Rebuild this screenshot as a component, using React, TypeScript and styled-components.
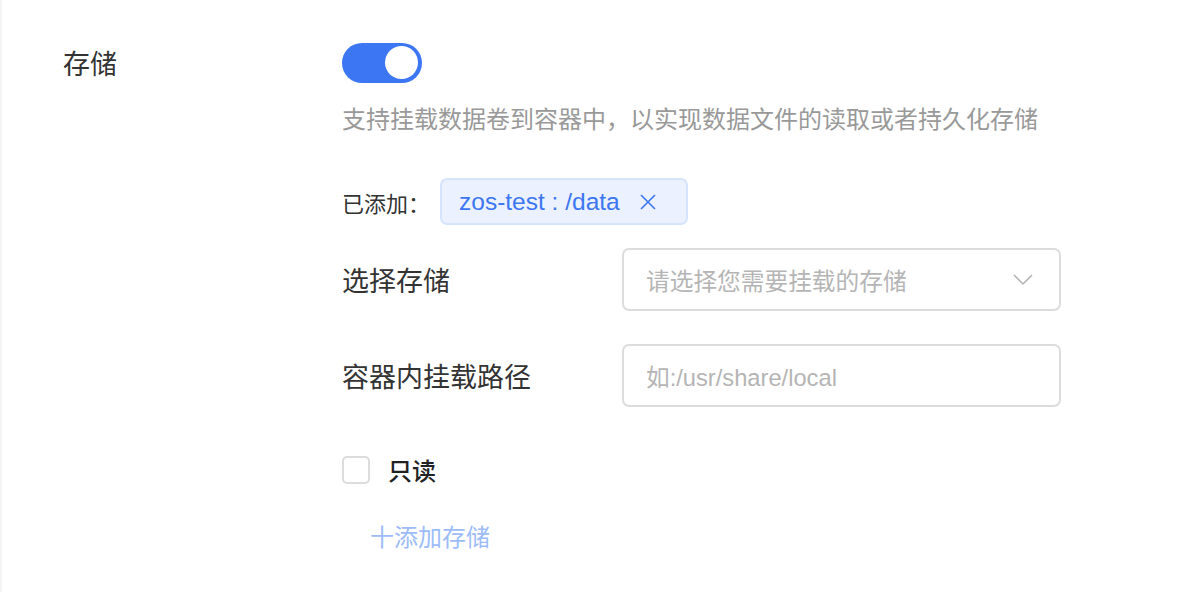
import React from "react";
import styled, { createGlobalStyle } from "styled-components";

const Global = createGlobalStyle`
  html, body { margin: 0; padding: 0; background: #fff; }
  body { font-family: "Noto Sans CJK SC", "Noto Sans", sans-serif; }
  * { box-sizing: border-box; }
`;

const Page = styled.div`
  width: 1194px;
  height: 592px;
  border-left: 2px solid #f4f4f4;
  background: #fff;
  display: flex;
  padding-top: 43px;
`;

const LabelCol = styled.div`
  width: 340px;
  padding-left: 61px;
  font-size: 27px;
  color: #333;
  line-height: 40px;
`;

const Content = styled.div`
  display: flex;
  flex-direction: column;
  align-items: flex-start;
`;

const Switch = styled.div`
  width: 80px;
  height: 40px;
  border-radius: 20px;
  background: #3d76f2;
  position: relative;
  &::after {
    content: "";
    position: absolute;
    right: 4px;
    top: 3px;
    width: 33px;
    height: 33px;
    border-radius: 50%;
    background: #fff;
  }
`;

const Desc = styled.div`
  margin-top: 19px;
  font-size: 24px;
  line-height: 32px;
  color: #999;
`;

const AddedRow = styled.div`
  margin-top: 44px;
  display: flex;
  align-items: center;
  font-size: 22px;
  color: #333;
`;

const Tag = styled.div`
  margin-left: 10px;
  height: 47px;
  width: 248px;
  display: flex;
  align-items: center;
  padding-left: 17px;
  border: 2px solid #d6e3fc;
  background: #ebf1fe;
  border-radius: 7px;
  color: #3d76f2;
  font-family: "Liberation Sans", "Noto Sans CJK SC", sans-serif;
  font-size: 24.5px;
`;

const TagClose = styled.span`
  margin-left: 20px;
  display: inline-flex;
  align-items: center;
`;

const FieldRow = styled.div<{ $mt: number }>`
  margin-top: ${(p) => p.$mt}px;
  display: flex;
  align-items: center;
`;

const FieldLabel = styled.div`
  width: 280px;
  font-size: 27px;
  color: #333;
`;

const Box = styled.div`
  width: 439px;
  height: 63px;
  border: 2px solid #dcdcdc;
  border-radius: 7px;
  display: flex;
  align-items: center;
  justify-content: space-between;
  padding: 0 26px 0 22px;
  font-size: 23.7px;
  color: #b5b5b5;
`;

const Placeholder = styled.span<{ $latin?: boolean }>`
  font-family: ${(p) =>
    p.$latin
      ? `"Liberation Sans", "Noto Sans CJK SC", sans-serif`
      : `"Noto Sans CJK SC", sans-serif`};
`;

const CheckRow = styled.label`
  margin-top: 45px;
  display: flex;
  align-items: center;
  gap: 18px;
  font-size: 24px;
  font-weight: 500;
  color: #222;
`;

const CheckBox = styled.span`
  width: 28px;
  height: 28px;
  border: 2px solid #dcdcdc;
  border-radius: 5px;
  background: #fff;
`;

const AddLink = styled.div`
  margin-top: 31px;
  margin-left: 28px;
  font-size: 24px;
  color: #9dbcf7;
  display: flex;
  align-items: center;
`;

export default function App() {
  return (
    <>
      <Global />
      <Page>
        <LabelCol>存储</LabelCol>
        <Content>
          <Switch />
          <Desc>支持挂载数据卷到容器中，以实现数据文件的读取或者持久化存储</Desc>
          <AddedRow>
            已添加：
            <Tag>
              zos-test : /data
              <TagClose>
                <svg width="16" height="16" viewBox="0 0 16 16">
                  <path d="M1 1 L15 15 M15 1 L1 15" stroke="#3d76f2" strokeWidth="1.6" fill="none" />
                </svg>
              </TagClose>
            </Tag>
          </AddedRow>
          <FieldRow $mt={23}>
            <FieldLabel>选择存储</FieldLabel>
            <Box>
              <Placeholder>请选择您需要挂载的存储</Placeholder>
              <svg width="20" height="12" viewBox="0 0 20 12">
                <path d="M1 1 L10 10 L19 1" stroke="#b0b0b0" strokeWidth="1.5" fill="none" />
              </svg>
            </Box>
          </FieldRow>
          <FieldRow $mt={33}>
            <FieldLabel>容器内挂载路径</FieldLabel>
            <Box>
              <Placeholder $latin>如:/usr/share/local</Placeholder>
            </Box>
          </FieldRow>
          <CheckRow>
            <CheckBox />
            只读
          </CheckRow>
          <AddLink>十添加存储</AddLink>
        </Content>
      </Page>
    </>
  );
}
